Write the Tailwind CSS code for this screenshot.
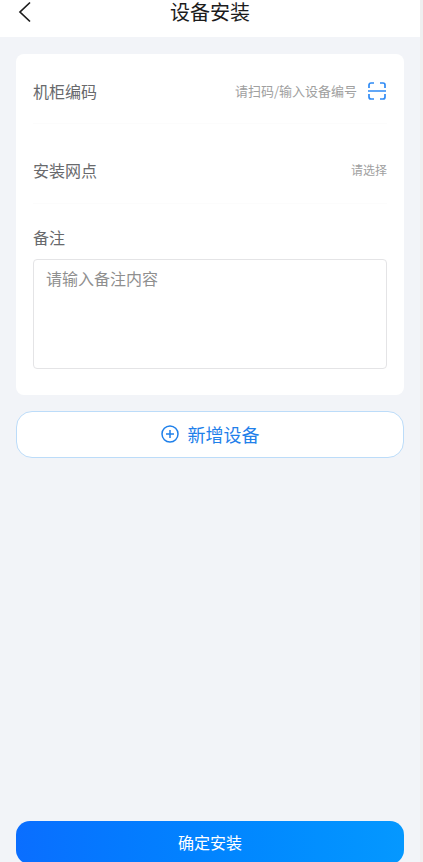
<!DOCTYPE html>
<html lang="zh-CN">
<head>
<meta charset="UTF-8">
<meta name="viewport" content="width=device-width, initial-scale=1">
<title>设备安装</title>
<script src="https://cdn.jsdelivr.net/npm/@tailwindcss/browser@4"></script>
</head>
<body class="h-screen overflow-hidden bg-[#efeff0] pr-[3px] font-['Noto_Sans_CJK_SC',sans-serif]">
<div class="flex h-full flex-col bg-[#f2f4f8]">
  <header class="grid h-[37px] shrink-0 grid-cols-[1fr_auto_1fr] items-start bg-white px-4">
    <button type="button" aria-label="返回" class="flex h-6 w-6 items-center">
      <svg class="h-6 w-4" viewBox="0 0 16 24" fill="none" stroke="#1c1c1c" stroke-width="1.7"><path d="M14 2.5 4 12l10 9.5"/></svg>
    </button>
    <h1 class="text-[20px] leading-6 text-[#1c1c1c]">设备安装</h1>
  </header>

  <form class="flex min-h-0 flex-1 flex-col px-4 pt-[17px]">
    <section class="shrink-0 rounded-lg bg-white px-[17px] pb-[26px]">
      <div class="flex h-[70px] items-center border-b border-[#fcfcfc] pt-1">
        <label for="code" class="shrink-0 text-[16px] leading-6 text-[#68696c]">机柜编码</label>
        <input id="code" type="text" placeholder="请扫码/输入设备编号" class="min-w-0 flex-1 text-right text-[13px] leading-6 text-[#68696c] outline-none placeholder:text-[#a0a0a0]">
        <button type="button" aria-label="扫码" class="mr-px ml-[11px] shrink-0">
          <svg class="h-[18px] w-[18px]" viewBox="0 0 18 18" fill="none" stroke="#2f8bf5" stroke-width="1.7"><path d="M1 6V3a2 2 0 0 1 2-2h3M12 1h3a2 2 0 0 1 2 2v3M17 12v3a2 2 0 0 1-2 2h-3M6 17H3a2 2 0 0 1-2-2v-3M0 9h18"/></svg>
        </button>
      </div>
      <div class="flex h-20 items-center border-b border-[#fcfcfc] pt-[13px]">
        <label for="site" class="shrink-0 text-[16px] leading-6 text-[#68696c]">安装网点</label>
        <select id="site" class="min-w-0 flex-1 appearance-none bg-transparent text-right text-[12px] leading-6 text-[#a0a0a0] outline-none [text-align-last:right]">
          <option>请选择</option>
        </select>
      </div>
      <label for="remark" class="block pt-[21px] text-[16px] leading-6 text-[#68696c]">备注</label>
      <textarea id="remark" placeholder="请输入备注内容" class="mt-2.5 block h-[110px] w-full resize-none rounded border border-[#e4e4e6] bg-white px-3 py-1.5 text-[16px] leading-6 text-[#68696c] outline-none placeholder:text-[#8f8f8f]"></textarea>
    </section>

    <button type="button" class="mt-4 flex h-[47px] shrink-0 items-center justify-center gap-[9px] rounded-2xl border border-[#bcdcf9] bg-white pb-0.5 text-[18px] leading-6 text-[#1f80ea]">
      <svg class="h-[18px] w-[18px]" viewBox="0 0 18 18" fill="none" stroke="currentColor" stroke-width="1.5"><circle cx="9" cy="9" r="8"/><path d="M9 5v8M5 9h8"/></svg>
      新增设备
    </button>

    <button type="submit" class="-mb-0.5 mt-auto h-[43px] shrink-0 rounded-[14px] bg-gradient-to-r from-[#0a6eff] to-[#0598ff] pb-0.5 text-[16px] leading-6 text-white">确定安装</button>
  </form>
</div>
</body>
</html>
